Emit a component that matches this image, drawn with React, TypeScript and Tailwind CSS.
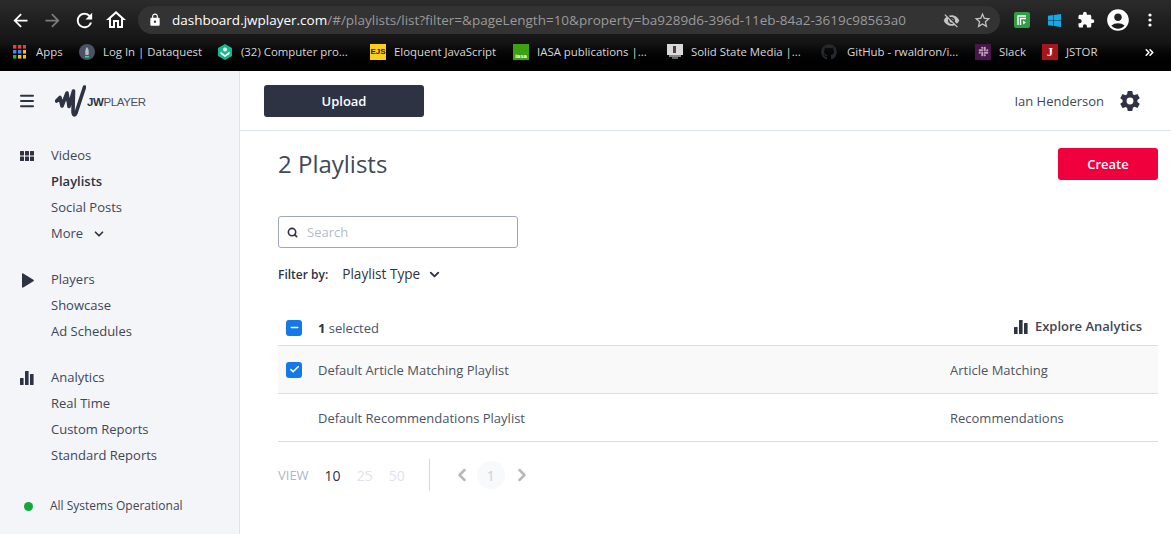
import { ChevronDown, ChevronLeft, ChevronRight, ChevronsRight, Menu, Minus, Check, Search } from "lucide-react";
import type { ReactNode } from "react";
import { FaGithub, FaSlack, FaWindows } from "react-icons/fa";
import { IoSettingsSharp } from "react-icons/io5";
import { MdAccountCircle, MdArrowBack, MdArrowForward, MdExtension, MdLock, MdOutlineHome, MdRefresh, MdStarBorder, MdVisibilityOff } from "react-icons/md";

function GridIcon() {
  return (
    <svg width="14" height="10" viewBox="0 0 14 10" fill="#2d3343">
      {[0, 5, 10].map((x) =>
        [0, 5.5].map((y) => <rect key={`${x}-${y}`} x={x} y={y} width="4" height="4.5" rx="0.5" />),
      )}
    </svg>
  );
}

function BarsIcon() {
  return (
    <svg width="14" height="14" viewBox="0 0 14 14" fill="#2d3343">
      <rect x="0" y="7" width="3.6" height="7" rx="0.5" />
      <rect x="5" y="0" width="3.6" height="14" rx="0.5" />
      <rect x="10" y="3" width="3.6" height="11" rx="0.5" />
    </svg>
  );
}

function PlayIcon() {
  return (
    <svg width="12" height="15" viewBox="0 0 12 15" fill="#2d3343" className="ml-[2px]">
      <path d="M1.2 0.4 L11.4 6.7 C12 7.1 12 7.9 11.4 8.3 L1.2 14.6 C0.6 15 0 14.6 0 14 V1 C0 0.4 0.6 0 1.2 0.4Z" />
    </svg>
  );
}

function Logo() {
  return (
    <div className="flex items-center">
      <svg width="31" height="32" viewBox="0 0 31 32" fill="none" stroke="#2d3343" strokeWidth="3.6" strokeLinecap="round" strokeLinejoin="round">
        <path d="M1.5 16 L5 12.5 L7 21 L12 8 L14 21.5 L18.5 6 L18 27 C18.5 31 20 30.5 21 28 L29.5 2" />
      </svg>
      <span className="ml-[1px] mt-[3px] font-['Liberation_Sans',sans-serif] text-[11.5px] leading-none tracking-[-0.4px] text-[#4a5060]">
        <span className="font-bold text-[#2d3343]">JW</span>PLAYER
      </span>
    </div>
  );
}

function AppsIcon() {
  const colors = ["#ea4335", "#ea4335", "#ea4335", "#4285f4", "#4285f4", "#fbbc05", "#34a853", "#fbbc05", "#fbbc05"];
  return (
    <svg width="13" height="14" viewBox="0 0 13 14" className="mt-[1px]">
      {colors.map((c, i) => (
        <rect key={i} x={(i % 3) * 5} y={Math.floor(i / 3) * 5} width="3.4" height="3.6" fill={c} />
      ))}
    </svg>
  );
}

const bookmarks: { label: string; width: string; icon: ReactNode }[] = [
  {
    label: "Log In | Dataquest",
    width: "w-[138px]",
    icon: (
      <svg width="16" height="16" viewBox="0 0 16 16">
        <circle cx="8" cy="8" r="8" fill="#4a5266" />
        <path d="M8 3 C10 5 10 8 9.5 11 H6.5 C6 8 6 5 8 3Z" fill="#b8bcc8" />
        <rect x="6" y="12" width="4" height="1.5" fill="#3ccf91" />
      </svg>
    ),
  },
  {
    label: "(32) Computer pro...",
    width: "w-[153px]",
    icon: (
      <svg width="16" height="16" viewBox="0 0 16 16">
        <path d="M8 0 L15 4 V12 L8 16 L1 12 V4Z" fill="#13b88f" />
        <circle cx="8" cy="5.5" r="2" fill="#fff" />
        <path d="M3.5 7.5 L8 11 L12.5 7.5 V10 L8 13 L3.5 10Z" fill="#fff" />
      </svg>
    ),
  },
  {
    label: "Eloquent JavaScript",
    width: "w-[143px]",
    icon: (
      <span className="flex h-[16px] w-[16px] items-center justify-center overflow-hidden bg-[#fbce1c] font-['Liberation_Sans',sans-serif] text-[8px] font-bold leading-none text-[#1a1a1a]">
        EJS
      </span>
    ),
  },
  {
    label: "IASA publications |...",
    width: "w-[154px]",
    icon: (
      <span className="flex h-[16px] w-[16px] items-end justify-center bg-[#3aa30f] font-['Liberation_Sans',sans-serif] text-[6px] font-bold leading-[7px] text-white">
        iasa
      </span>
    ),
  },
  {
    label: "Solid State Media |...",
    width: "w-[154px]",
    icon: (
      <svg width="16" height="16" viewBox="0 0 16 16">
        <rect x="0" y="0" width="16" height="11" fill="#d9d9d9" />
        <rect x="6" y="2" width="3" height="7" fill="#5a3a3a" />
        <rect x="2" y="11" width="12" height="2" fill="#888" />
        <rect x="5" y="13" width="6" height="2" fill="#666" />
      </svg>
    ),
  },
  {
    label: "GitHub - rwaldron/i...",
    width: "w-[154px]",
    icon: <FaGithub className="mr-[2px] h-[16px] w-[16px] text-[#24292e]" />,
  },
  {
    label: "Slack",
    width: "w-[67px]",
    icon: (
      <span className="flex h-[16px] w-[16px] items-center justify-center bg-[#4a154b]">
        <FaSlack className="h-[11px] w-[11px] text-[#b9a1ba]" />
      </span>
    ),
  },
  {
    label: "JSTOR",
    width: "w-[101px]",
    icon: (
      <span className="flex h-[16px] w-[16px] items-center justify-center bg-[#a8161c] font-['Liberation_Serif',serif] text-[12px] font-bold leading-none text-white">
        J
      </span>
    ),
  },
];

const navGroups = [
  { icon: <GridIcon />, items: ["Videos", "Playlists", "Social Posts", "More"] },
  { icon: <PlayIcon />, items: ["Players", "Showcase", "Ad Schedules"] },
  { icon: <BarsIcon />, items: ["Analytics", "Real Time", "Custom Reports", "Standard Reports"] },
];

function Slot({ children }: { children: ReactNode }) {
  return <span className="flex w-[32px] shrink-0 items-center justify-center">{children}</span>;
}

function ChromeBar() {
  return (
    <div className="h-[71px] shrink-0 bg-gradient-to-b from-[#2b2b2b] via-[#141414] via-60% to-[#000000]">
      <div className="flex h-[36px] items-center pl-[4px] pt-[4px]">
        <Slot><MdArrowBack size={21} className="text-white" /></Slot>
        <Slot><MdArrowForward size={21} className="text-[#7b7b7b]" /></Slot>
        <Slot><MdRefresh size={23} className="text-white" /></Slot>
        <Slot><MdOutlineHome size={24} className="text-white" /></Slot>
        <div className="ml-[6px] flex h-[28px] w-[862px] shrink-0 items-center rounded-full bg-[#333333] pl-[10px] text-[13.5px]">
          <MdLock size={14} className="text-white" />
          <span className="ml-[10px] text-white">dashboard.jwplayer.com</span>
          <span className="text-[#9a9a9a]">/#/playlists/list?filter=&amp;pageLength=10&amp;property=ba9289d6-396d-11eb-84a2-3619c98563a0</span>
          <MdVisibilityOff size={17} className="ml-auto text-[#c4c4c4]" />
          <MdStarBorder size={19} className="ml-[13px] mr-[8px] text-[#c4c4c4]" />
        </div>
        <span className="ml-[6px]"><Slot>
          <svg width="16" height="16" viewBox="0 0 16 16">
            <rect width="16" height="16" rx="2" fill="#2f9e44" />
            <path d="M4 13 V4 H12 M6.5 13 V6.5 H12" fill="none" stroke="#fff" strokeWidth="1.4" />
            <path d="M9 8.5 L12 10.5 L9 12.5Z" fill="#fff" />
          </svg>
        </Slot></span>
        <Slot><FaWindows className="h-[15px] w-[15px] text-[#14a9e8]" /></Slot>
        <Slot><MdExtension size={18} className="text-white" /></Slot>
        <Slot><MdAccountCircle size={26} className="text-white" /></Slot>
        <Slot>
          <svg width="4" height="14" viewBox="0 0 4 14" fill="#fff">
            <circle cx="2" cy="2" r="1.6" />
            <circle cx="2" cy="7" r="1.6" />
            <circle cx="2" cy="12" r="1.6" />
          </svg>
        </Slot>
      </div>
      <div className="flex h-[32px] items-center pl-[13px] text-[11.4px] text-[#d6d6d6]">
        <div className="flex w-[66px] shrink-0 items-center gap-[10px]">
          <AppsIcon />
          <span>Apps</span>
        </div>
        {bookmarks.map((b) => (
          <div key={b.label} className={`flex ${b.width} shrink-0 items-center gap-[8px]`}>
            {b.icon}
            <span className="whitespace-nowrap">{b.label}</span>
          </div>
        ))}
        <ChevronsRight size={13} strokeWidth={3} className="text-white" />
      </div>
    </div>
  );
}

function Sidebar() {
  return (
    <aside className="flex w-[240px] shrink-0 flex-col border-r border-[#dfe3ec] bg-[#f3f5f9]">
      <div className="flex h-[60px] items-center pl-[18px]">
        <Menu size={18} strokeWidth={2.6} className="text-[#2d3343]" />
        <div className="ml-[19px]">
          <Logo />
        </div>
      </div>
      <nav className="mt-[12px] flex flex-col gap-[20px]">
        {navGroups.map((group) => (
          <div key={group.items[0]} className="flex flex-col">
            {group.items.map((item, i) => (
              <div key={item} className="flex h-[26px] items-center">
                <span className="flex w-[51px] shrink-0 justify-start pl-[20px]">{i === 0 && group.icon}</span>
                <span className={item === "Playlists" ? "font-semibold text-[#2d3343]" : "text-[#3f4657]"}>{item}</span>
                {item === "More" && <ChevronDown size={14} strokeWidth={3} className="ml-[9px] text-[#2d3343]" />}
              </div>
            ))}
          </div>
        ))}
      </nav>
      <div className="mt-[24px] flex h-[26px] items-center pl-[24px] text-[12px] text-[#3f4657]">
        <span className="h-[9px] w-[9px] rounded-full bg-[#13a83b]" />
        <span className="ml-[17px]">All Systems Operational</span>
      </div>
    </aside>
  );
}

function Row({ name, type, selected }: { name: string; type: string; selected?: boolean }) {
  return (
    <div className={`flex h-[48px] items-center border-b border-[#dcdde6] ${selected ? "bg-[#f9f9f9]" : ""}`}>
      <span className="flex w-[40px] justify-start pl-[8px]">
        {selected && (
          <span className="flex h-[16px] w-[16px] items-center justify-center rounded-[3px] bg-[#1479e6]">
            <Check size={11} strokeWidth={3.5} className="text-white" />
          </span>
        )}
      </span>
      <span className="w-[632px] pt-[2px] text-[#4b5365]">{name}</span>
      <span className="pt-[2px] text-[#4b5365]">{type}</span>
    </div>
  );
}

function Content() {
  return (
    <main className="flex min-w-0 flex-1 flex-col bg-white">
      <header className="flex h-[60px] shrink-0 items-center justify-between border-b border-[#dfe3ec] pl-[24px] pr-[30px]">
        <button className="h-[32px] w-[160px] rounded-[3px] bg-[#2d3343] pt-[2px] text-[13px] font-semibold text-white">Upload</button>
        <div className="flex items-center gap-[15px]">
          <span className="pt-[2px] text-[13px] text-[#3f4657]">Ian Henderson</span>
          <IoSettingsSharp className="h-[22px] w-[22px] text-[#2d3343]" />
        </div>
      </header>
      <div className="flex flex-col pl-[38px] pr-[13px]">
        <div className="mt-[17px] flex h-[32px] items-center justify-between">
          <h1 className="text-[24px] text-[#414859]">2 Playlists</h1>
          <button className="h-[32px] w-[100px] rounded-[3px] bg-[#f0003c] pt-[2px] text-[13px] font-semibold text-white">Create</button>
        </div>
        <div className="mt-[36px] flex h-[32px] w-[240px] items-center rounded-[3px] border border-[#9ea6bb] pl-[8px]">
          <Search size={11} strokeWidth={3.5} className="text-[#2d3343]" />
          <span className="ml-[9px] pt-[2px] text-[#b4bccb]">Search</span>
        </div>
        <div className="mt-[14px] flex h-[24px] items-center">
          <span className="pt-[2px] text-[12px] font-semibold text-[#2d3343]">Filter by:</span>
          <span className="ml-[14px] text-[13.6px] text-[#2d3343]">Playlist Type</span>
          <ChevronDown size={15} strokeWidth={3} className="ml-[7px] text-[#2d3343]" />
        </div>
        <div className="mt-[24px] flex h-[36px] items-center border-b border-[#dcdde6]">
          <span className="flex w-[40px] justify-start pl-[8px]">
            <span className="flex h-[16px] w-[16px] items-center justify-center rounded-[3px] bg-[#1479e6]">
              <Minus size={11} strokeWidth={3.5} className="text-white" />
            </span>
          </span>
          <span className="pt-[2px] text-[#4b5365]"><span className="font-bold text-[#2d3343]">1</span> selected</span>
          <span className="ml-auto mr-[16px] flex items-center gap-[7px] pb-[2px] font-semibold text-[#3f4657]">
            <BarsIcon />
            Explore Analytics
          </span>
        </div>
        <Row name="Default Article Matching Playlist" type="Article Matching" selected />
        <Row name="Default Recommendations Playlist" type="Recommendations" />
        <div className="mt-[17px] flex h-[32px] items-center text-[14px] text-[#b0b6c6]">
          <span className="pt-[2px] text-[13px]">VIEW</span>
          <span className="ml-[16px] text-[#2d3343]">10</span>
          <span className="ml-[16px] text-[#dfe2ea]">25</span>
          <span className="ml-[16px] text-[#dfe2ea]">50</span>
          <span className="ml-[24px] h-[32px] w-px bg-[#d5d8e2]" />
          <ChevronLeft size={20} strokeWidth={3} className="ml-[22px] text-[#b8b8b8]" />
          <span className="ml-[5px] flex h-[28px] w-[28px] items-center justify-center rounded-full bg-[#f8f9fb] text-[#c9ced9]">1</span>
          <ChevronRight size={20} strokeWidth={3} className="ml-[7px] text-[#b8b8b8]" />
        </div>
      </div>
    </main>
  );
}

export default function App() {
  return (
    <div className="flex h-[534px] w-[1171px] flex-col overflow-hidden bg-white font-['Open_Sans',sans-serif] text-[13px]">
      <ChromeBar />
      <div className="flex min-h-0 flex-1">
        <Sidebar />
        <Content />
      </div>
    </div>
  );
}
